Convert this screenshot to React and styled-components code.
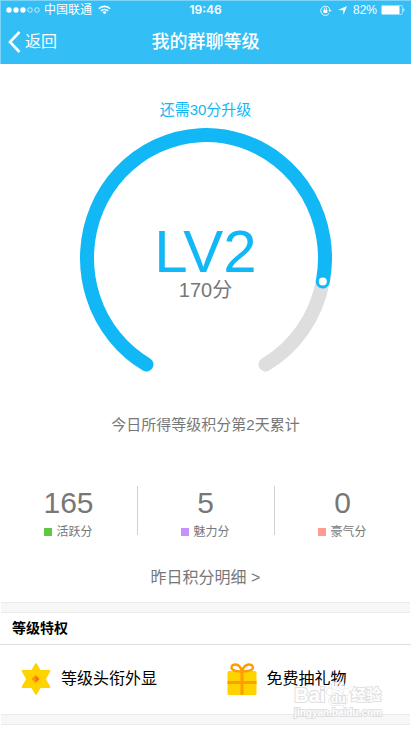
import React from "react";
import styled, { createGlobalStyle } from "styled-components";

const SCORES = [
  { label: "活跃分", value: 165, color: "#5ec63f" },
  { label: "魅力分", value: 5, color: "#c591ff" },
  { label: "豪气分", value: 0, color: "#ff9c8f" },
];

// arc runs clockwise from the lower left, leaving a 60 degree gap at the bottom
const ARC = { cx: 126, cy: 130, rx: 119, ry: 123 };
const ARC_START = 120;
const ARC_END = 420;
const ARC_CURRENT = 371;

const pointAt = (degrees) => {
  const angle = (degrees * Math.PI) / 180;
  return {
    x: ARC.cx + ARC.rx * Math.cos(angle),
    y: ARC.cy + ARC.ry * Math.sin(angle),
  };
};

const arcPath = (from, to) => {
  const start = pointAt(from);
  const end = pointAt(to);
  const large = to - from > 180 ? 1 : 0;
  return `M${start.x} ${start.y}A${ARC.rx} ${ARC.ry} 0 ${large} 1 ${end.x} ${end.y}`;
};

const LevelRing = () => {
  const knob = pointAt(ARC_CURRENT);
  return (
    <Ring viewBox="0 0 252 244" fill="none" aria-hidden="true">
      <path
        d={arcPath(ARC_CURRENT, ARC_END)}
        stroke="#dedede"
        strokeWidth="14"
        strokeLinecap="round"
      />
      <path
        d={arcPath(ARC_START, ARC_CURRENT)}
        stroke="#12b7f5"
        strokeWidth="14"
        strokeLinecap="round"
      />
      <circle cx={knob.x} cy={knob.y} r="4" fill="#fff" />
    </Ring>
  );
};

const SignalDots = () => (
  <svg width="34" height="6" viewBox="0 0 34 6" aria-hidden="true">
    {[3, 10, 17].map((x) => (
      <circle key={x} cx={x} cy="3" r="2.7" fill="#fff" />
    ))}
    {[24, 31].map((x) => (
      <circle key={x} cx={x} cy="3" r="2.3" fill="none" stroke="#fff" strokeWidth=".7" />
    ))}
  </svg>
);

const WifiIcon = () => (
  <svg width="13" height="10" viewBox="0 0 13 10" fill="none" stroke="#fff" aria-hidden="true">
    <path d="M.8 3.7a8.1 8.1 0 0 1 11.4 0" strokeWidth="1.6" />
    <path d="M2.9 5.9a5.1 5.1 0 0 1 7.2 0" strokeWidth="1.5" />
    <path d="M6.5 9.3 4.4 7.2a3 3 0 0 1 4.2 0z" fill="#fff" stroke="none" />
  </svg>
);

const RotationLockIcon = () => (
  <svg width="12" height="11" viewBox="0 0 12 11" fill="none" stroke="#fff" aria-hidden="true">
    <path d="M9.2 8.3A4.6 4.6 0 1 1 9.9 5" strokeWidth=".9" />
    <path d="M8.3 4.9h3.2L9.9 7z" fill="#fff" stroke="none" />
    <path d="M4.3 5V3.8a1.1 1.1 0 0 1 2.2 0V5" strokeWidth=".8" />
    <path d="M3.4 4.9h4v3h-4z" fill="#fff" stroke="none" />
  </svg>
);

const LocationIcon = () => (
  <svg width="9" height="9" viewBox="0 0 9 9" fill="#fff" aria-hidden="true">
    <path d="M9 0 5.3 9V4.3L0 4z" />
  </svg>
);

const BatteryIcon = () => (
  <svg width="24" height="10" viewBox="0 0 24 10" fill="none" aria-hidden="true">
    <rect x=".4" y=".4" width="21" height="9.2" rx="1.4" stroke="#fff" strokeOpacity=".7" strokeWidth=".8" />
    <rect x="1" y="1" width="17.5" height="8" rx=".8" fill="#fff" />
    <path d="M22.4 3.3c1.4.4 1.4 3 0 3.4z" fill="#fff" />
  </svg>
);

const BackIcon = () => (
  <svg width="13" height="22" viewBox="0 0 13 22" fill="none" aria-hidden="true">
    <path d="M11.5 1 2 11l9.5 10" stroke="#fff" strokeWidth="2.6" />
  </svg>
);

const StarIcon = () => (
  <svg width="30" height="32" viewBox="0 0 30 32" aria-hidden="true">
    <path
      d="M15 1.2 19 8H28.3L23.8 16 28.3 24H19L15 30.8 11 24H1.7L6.2 16 1.7 8H11Z"
      fill="#ffd300"
      stroke="#ffd300"
      strokeWidth="2"
      strokeLinejoin="round"
    />
    <path d="M14.5 12v8l-4-4z" fill="#ff9505" />
    <path d="M14.5 12l4 4-4 4z" fill="#ff6a10" />
  </svg>
);

const GiftIcon = () => (
  <svg width="30" height="32" viewBox="0 0 30 32" fill="none" aria-hidden="true">
    <rect x=".5" y="8" width="29" height="24" rx="1.5" fill="#ffd300" />
    <path d="M.5 19.5h29M15 8v24" stroke="#ff9c00" strokeWidth="3" />
    <path
      d="M15 8.5C12 8.5 4.5 8 4.5 4.6 4.5 2.5 6 1.5 8.5 1.5 12 1.5 14 5 15 8.5ZM15 8.5C18 8.5 26 8 26 4.6 26 2.5 24 1.5 22 1.5 18.5 1.5 16 5 15 8.5Z"
      fill="#fff"
      stroke="#ff9c00"
      strokeWidth="2.4"
      strokeLinejoin="round"
    />
  </svg>
);

const PawIcon = () => (
  <PawShape width="26" height="26" viewBox="0 0 28 29" aria-hidden="true">
    <ellipse cx="4.5" cy="12" rx="3" ry="4" />
    <ellipse cx="10" cy="5" rx="3" ry="4.2" />
    <ellipse cx="18" cy="5" rx="3" ry="4.2" />
    <ellipse cx="23.5" cy="12" rx="3" ry="4" />
    <path d="M14 11c4 0 5 4 8 7 4 4 2 9-3 9-2 0-3-.5-5-.5s-3 .5-5 .5c-5 0-7-5-3-9 3-3 4-7 8-7z" />
  </PawShape>
);

export default function App() {
  return (
    <>
      <GlobalStyle />
      <Page>
        <Header>
          <StatusBar>
            <StatusGroup>
              <SignalDots />
              <Carrier>中国联通</Carrier>
              <WifiIcon />
            </StatusGroup>
            <Clock>19:46</Clock>
            <StatusGroup $end>
              <RotationLockIcon />
              <LocationIcon />
              <Charge>
                82%
                <BatteryIcon />
              </Charge>
            </StatusGroup>
          </StatusBar>
          <NavBar>
            <BackButton type="button">
              <BackIcon />
              返回
            </BackButton>
            <Title>我的群聊等级</Title>
          </NavBar>
        </Header>

        <Summary>
          <Hint>还需30分升级</Hint>
          <Gauge>
            <LevelRing />
            <LevelInfo>
              <Level>LV2</Level>
              <Points>170分</Points>
            </LevelInfo>
          </Gauge>
          <Note>今日所得等级积分第2天累计</Note>
          <Scores>
            {SCORES.map((score) => (
              <Score key={score.label}>
                <ScoreValue>{score.value}</ScoreValue>
                <ScoreLabel>
                  <Swatch $color={score.color} />
                  {score.label}
                </ScoreLabel>
              </Score>
            ))}
          </Scores>
          <DetailLink href="#detail">昨日积分明细 &gt;</DetailLink>
        </Summary>

        <Separator />
        <Privileges>
          <SectionTitle>等级特权</SectionTitle>
          <PrivilegeList>
            <Privilege>
              <StarIcon />
              等级头衔外显
            </Privilege>
            <Privilege>
              <GiftIcon />
              免费抽礼物
            </Privilege>
          </PrivilegeList>
          <Watermark>
            <WatermarkBrand>
              Bai
              <Paw>
                <PawIcon />
                <PawText>du</PawText>
              </Paw>
              <WatermarkName>经验</WatermarkName>
            </WatermarkBrand>
            <WatermarkSite>jingyan.baidu.com</WatermarkSite>
          </Watermark>
        </Privileges>
        <Separator />
      </Page>
    </>
  );
}

const GlobalStyle = createGlobalStyle`
  * {
    box-sizing: border-box;
  }
  body {
    margin: 0;
    background: #fff;
    color: #777;
    font-family: "Liberation Sans", "Noto Sans CJK SC", sans-serif;
  }
  h1, h2, p, ul {
    margin: 0;
    padding: 0;
    list-style: none;
  }
  svg {
    display: block;
    flex-shrink: 0;
  }
`;

const Page = styled.main`
  display: flex;
  flex-direction: column;
`;

const Header = styled.header`
  background: #34bef6;
  box-shadow: inset 1px 1px 0 #7bd5fa;
  color: #fff;
`;

const StatusBar = styled.div`
  display: grid;
  grid-template-columns: 1fr auto 1fr;
  align-items: center;
  height: 20px;
  padding: 0 6px;
  font-size: 12px;
  line-height: 20px;
`;

const StatusGroup = styled.div`
  display: flex;
  align-items: center;
  justify-content: ${({ $end }) => ($end ? "flex-end" : "flex-start")};
  gap: ${({ $end }) => ($end ? "6px" : "4px")};
`;

const Carrier = styled.span`
  margin-right: 2px;
`;

const Clock = styled.time`
  font-family: Inter, sans-serif;
  font-weight: 600;
`;

const Charge = styled.span`
  display: flex;
  align-items: center;
  gap: 4px;
`;

const NavBar = styled.nav`
  display: grid;
  grid-template-columns: 1fr auto 1fr;
  align-items: center;
  height: 44px;
  padding: 0 8px;
`;

const BackButton = styled.button`
  display: flex;
  align-items: center;
  justify-self: start;
  gap: 4px;
  padding: 0;
  border: 0;
  background: none;
  color: inherit;
  font: inherit;
  font-size: 16px;
  line-height: 24px;
  cursor: pointer;
`;

const Title = styled.h1`
  font-size: 18px;
  font-weight: 500;
  line-height: 24px;
`;

const Summary = styled.section`
  display: flex;
  flex-direction: column;
  align-items: center;
  padding: 36px 0 12px;
`;

const Hint = styled.p`
  color: #12b7f5;
  font-size: 15px;
  line-height: 20px;
`;

const Gauge = styled.div`
  display: grid;
  margin-top: 8px;
`;

const Ring = styled.svg`
  grid-area: 1 / 1;
  width: 252px;
  height: 244px;
`;

const LevelInfo = styled.div`
  grid-area: 1 / 1;
  padding-top: 96px;
  text-align: center;
`;

const Level = styled.p`
  color: #12b7f5;
  font-size: 60px;
  line-height: 56px;
`;

const Points = styled.p`
  font-size: 20px;
  line-height: 20px;
`;

const Note = styled.p`
  margin-top: 43px;
  font-size: 15px;
  line-height: 20px;
`;

const Scores = styled.ul`
  display: grid;
  grid-template-columns: repeat(3, 1fr);
  align-self: stretch;
  margin-top: 51px;
`;

const Score = styled.li`
  display: flex;
  flex-direction: column;
  align-items: center;
  gap: 2px;

  & + & {
    background: linear-gradient(#d0d0d0, #d0d0d0) left top / 1px 49px no-repeat;
  }
`;

const ScoreValue = styled.span`
  font-size: 30px;
  line-height: 34px;
`;

const ScoreLabel = styled.span`
  display: flex;
  align-items: center;
  gap: 4px;
  font-size: 12px;
  line-height: 20px;
`;

const Swatch = styled.i`
  width: 8px;
  height: 8px;
  background: ${({ $color }) => $color};
`;

const DetailLink = styled.a`
  margin-top: 24px;
  color: inherit;
  font-size: 16px;
  line-height: 24px;
  text-decoration: none;
`;

const Separator = styled.div`
  height: 11px;
  margin: 0 1px;
  border-top: 1px solid #ebebeb;
  border-bottom: 1px solid #ebebeb;
  background: #f7f7f7;
`;

const Privileges = styled.section`
  position: relative;
  color: #000;
`;

const SectionTitle = styled.h2`
  padding: 0 12px;
  border-bottom: 1px solid #dedede;
  font-size: 14px;
  font-weight: 700;
  line-height: 31px;
`;

const PrivilegeList = styled.ul`
  display: grid;
  grid-template-columns: 1fr 1fr;
  padding: 18px 0 19px;
`;

const Privilege = styled.li`
  display: flex;
  align-items: center;
  gap: 10px;
  padding-left: 21px;
  font-size: 16px;
  line-height: 32px;
`;

const Watermark = styled.div`
  position: absolute;
  right: 29px;
  bottom: -5px;
  color: #fff;
  font-weight: 700;
  opacity: 0.8;
  pointer-events: none;
  -webkit-text-stroke: 2px #d8d8d8;
  paint-order: stroke fill;
`;

const WatermarkBrand = styled.div`
  display: flex;
  align-items: flex-end;
  font-size: 20px;
  line-height: 24px;
`;

const Paw = styled.span`
  display: grid;
  place-items: end center;
`;

const PawShape = styled.svg`
  grid-area: 1 / 1;
  fill: #fff;
  stroke: #c8c8c8;
`;

const PawText = styled.span`
  grid-area: 1 / 1;
  z-index: 1;
  font-size: 12px;
  line-height: 16px;
`;

const WatermarkName = styled.span`
  font-size: 15px;
`;

const WatermarkSite = styled.div`
  font-size: 10px;
  line-height: 12px;
  text-align: center;
`;
